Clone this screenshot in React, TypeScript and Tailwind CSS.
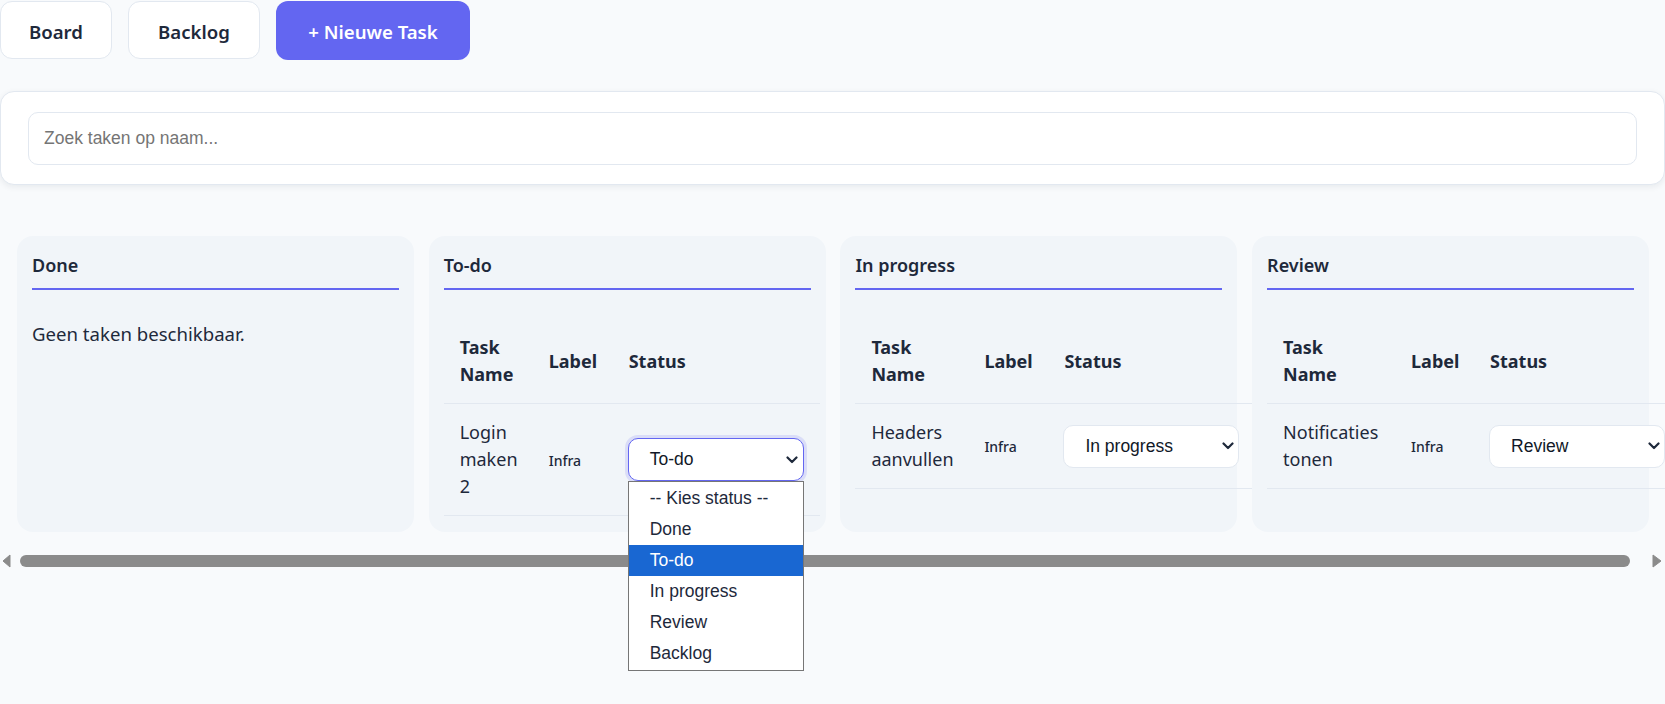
import React from "react";

type Task = { name: string; label: string; status: string; open?: boolean };
type Column = {
  title: string;
  table: string;
  cols: [string, string, string];
  tasks: Task[];
};

const columns: Column[] = [
  { title: "Done", table: "w-[376px]", cols: ["w-[89px]", "w-[80px]", "w-[207px]"], tasks: [] },
  {
    title: "To-do",
    table: "w-[376px]",
    cols: ["w-[89px]", "w-[80px]", "w-[207px]"],
    tasks: [{ name: "Login maken 2", label: "Infra", status: "To-do", open: true }],
  },
  {
    title: "In progress",
    table: "w-[400px]",
    cols: ["w-[113px]", "w-[80px]", "w-[207px]"],
    tasks: [{ name: "Headers aanvullen", label: "Infra", status: "In progress" }],
  },
  {
    title: "Review",
    table: "w-[414px]",
    cols: ["w-[128px]", "w-[79px]", "w-[207px]"],
    tasks: [{ name: "Notificaties tonen", label: "Infra", status: "Review" }],
  },
];

const options = ["-- Kies status --", "Done", "To-do", "In progress", "Review", "Backlog"];

const Chevron = () => (
  <svg width="12" height="8" viewBox="0 0 12 8" fill="none" className="shrink-0">
    <path
      d="M1.5 1.5 L6 6 L10.5 1.5"
      stroke="#1e293b"
      strokeWidth="2.2"
      strokeLinecap="round"
      strokeLinejoin="round"
    />
  </svg>
);

function SelectBox({ value, open }: { value: string; open?: boolean }) {
  return (
    <div className="relative w-[176px]">
      <div
        className={
          open
            ? "flex h-[43px] w-[176px] items-center justify-between rounded-[10px] border border-[#6366f1] bg-white pl-[21px] pr-[5px] shadow-[0_0_0_3px_rgba(99,102,241,0.16)]"
            : "flex h-[43px] w-[176px] items-center justify-between rounded-[10px] border border-[#e2e8f0] bg-white pl-[21px] pr-[4px]"
        }
      >
        <span className="font-['Liberation_Sans',Arial,sans-serif] text-[17.5px] text-[#111827]">{value}</span>
        <Chevron />
      </div>
      {open && (
        <div className="absolute left-0 top-full z-10 w-[176px] border border-[#767676] bg-white py-px font-['Liberation_Sans',Arial,sans-serif] text-[17.5px]">
          {options.map((o) => (
            <div
              key={o}
              className={
                o === value
                  ? "flex h-[31px] items-center bg-[#1967d2] pl-[21px] text-white"
                  : "flex h-[31px] items-center pl-[21px] text-[#1e293b]"
              }
            >
              {o}
            </div>
          ))}
        </div>
      )}
    </div>
  );
}

function BoardColumn({ col }: { col: Column }) {
  return (
    <div className="flex w-[397px] shrink-0 flex-col rounded-[16px] bg-[#f1f5f9] px-[15px] pb-4 pt-4">
      <h2 className="border-b-2 border-[#6366f1] pb-[9px] text-[18px] font-semibold leading-[27px] text-[#1e293b]">
        {col.title}
      </h2>
      {col.tasks.length === 0 ? (
        <p className="mt-[31px] text-[18.6px] leading-[26px] text-[#1e293b]">Geen taken beschikbaar.</p>
      ) : (
        <table
          className={`${col.table} mt-[29px] max-w-none table-fixed border-collapse text-left text-[18px] leading-[27px] text-[#1e293b]`}
        >
          <colgroup>
            <col className={col.cols[0]} />
            <col className={col.cols[1]} />
            <col className={col.cols[2]} />
          </colgroup>
          <thead>
            <tr className="border-b border-[#e2e8f0]">
              <th className="px-4 py-[15px] align-middle font-bold">Task Name</th>
              <th className="px-4 py-[15px] align-middle font-bold">Label</th>
              <th className="px-4 py-[15px] align-middle font-bold">Status</th>
            </tr>
          </thead>
          <tbody>
            {col.tasks.map((t) => (
              <tr key={t.name} className="border-b border-[#e2e8f0]">
                <td className="px-4 py-[15px] align-middle">{t.name}</td>
                <td className="px-4 py-[15px] align-middle">
                  <span className="text-[14px] font-medium">{t.label}</span>
                </td>
                <td className="py-[15px] pl-[15px] pr-4 align-middle">
                  <SelectBox value={t.status} open={t.open} />
                </td>
              </tr>
            ))}
          </tbody>
        </table>
      )}
    </div>
  );
}

export default function App() {
  return (
    <div className="h-[704px] w-full overflow-hidden bg-[#f8fafc] font-['Noto_Sans',sans-serif] text-[#1e293b]">
      <div className="mt-px flex gap-4">
        <button className="h-[58px] w-[112px] rounded-[12px] border border-[#e2e8f0] bg-white pt-[3px] text-[18.6px] font-semibold text-[#1e293b]">
          Board
        </button>
        <button className="h-[58px] w-[132px] rounded-[12px] border border-[#e2e8f0] bg-white pt-[3px] text-[18.6px] font-semibold text-[#1e293b]">
          Backlog
        </button>
        <button className="h-[59px] w-[194px] rounded-[12px] bg-[#6366f1] pt-[3px] text-[18.6px] font-semibold text-white">
          + Nieuwe Task
        </button>
      </div>

      <div className="mt-[31px] rounded-[14px] border border-[#e2e8f0] bg-white px-[27px] pb-[19px] pt-[20px] shadow-[0_2px_6px_rgba(15,23,42,0.07)]">
        <div className="flex h-[53px] items-center rounded-[10px] border border-[#e2e8f0] bg-white pl-[15px]">
          <span className="font-['Liberation_Sans',Arial,sans-serif] text-[17.5px] text-[#757575]">
            Zoek taken op naam...
          </span>
        </div>
      </div>

      <div className="mt-[51px] flex gap-[14.7px] pb-[19px] pl-[17px]">
        {columns.map((c) => (
          <BoardColumn key={c.title} col={c} />
        ))}
      </div>

      <div className="flex h-[20px] items-center pl-[2px] pr-[3px]">
        <svg width="9" height="14" viewBox="0 0 9 14" className="shrink-0">
          <polygon points="8,1 8,13 1,7" fill="#8b8b8b" stroke="#8b8b8b" strokeWidth="1" strokeLinejoin="round" />
        </svg>
        <div className="ml-[9px] mr-[22px] h-[12px] flex-1 rounded-full bg-[#8b8b8b]" />
        <svg width="10" height="14" viewBox="0 0 10 14" className="shrink-0">
          <polygon points="1,1 1,13 9,7" fill="#8b8b8b" stroke="#8b8b8b" strokeWidth="1" strokeLinejoin="round" />
        </svg>
      </div>
    </div>
  );
}
